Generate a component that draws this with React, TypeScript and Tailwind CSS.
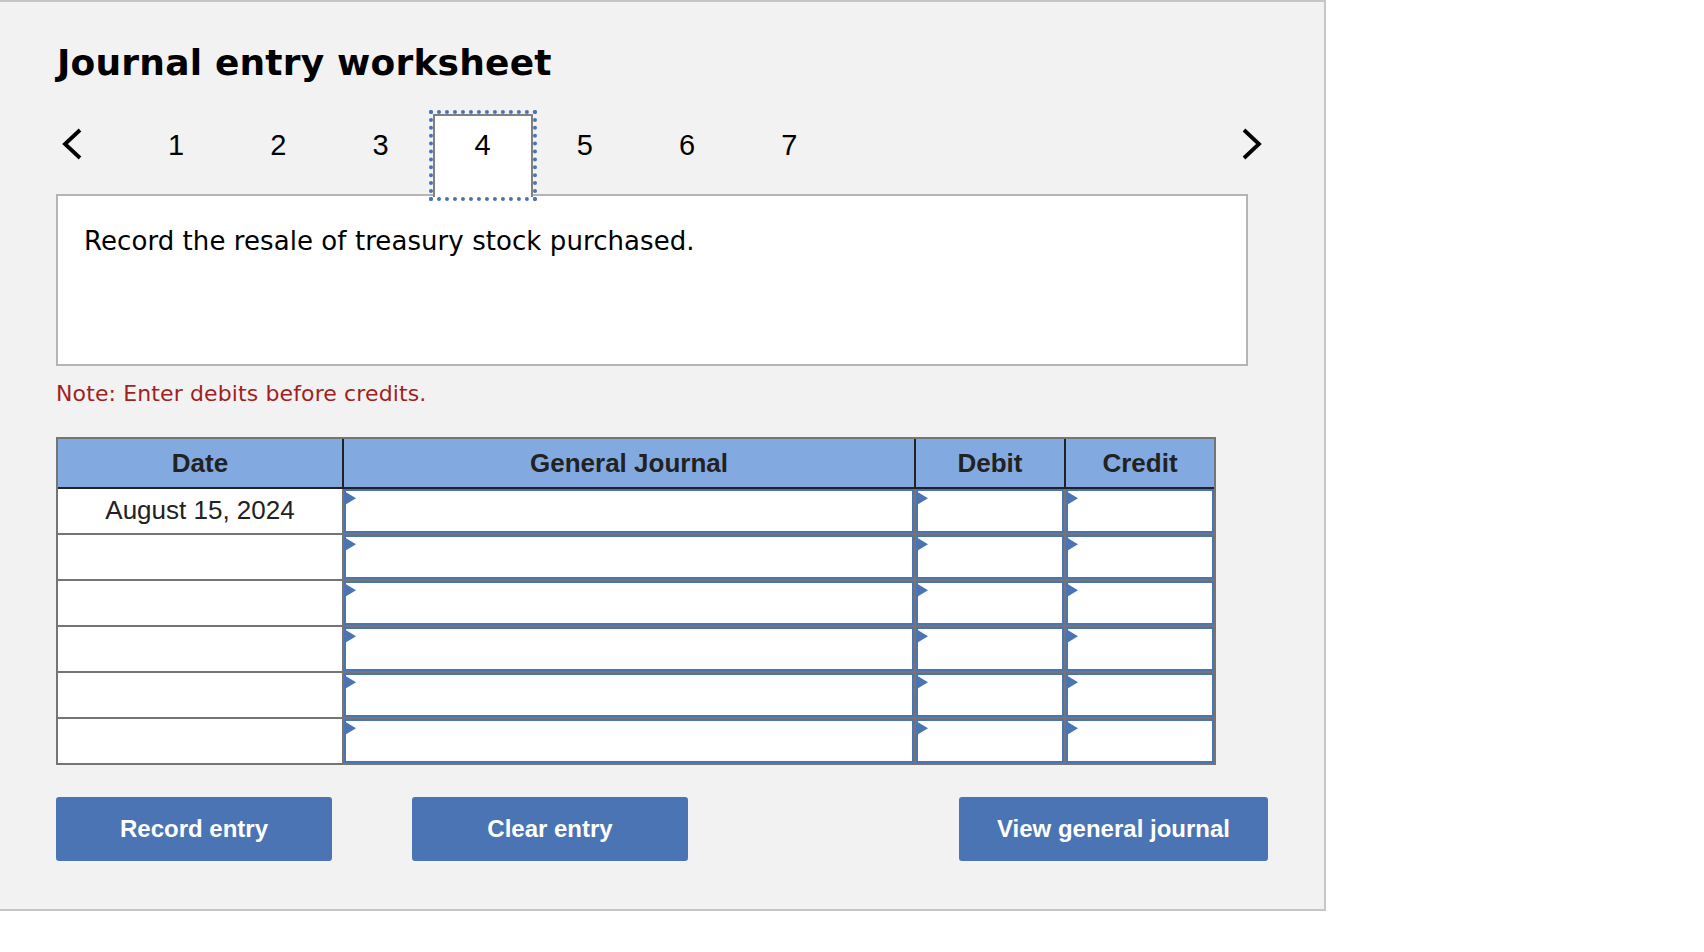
const BLUE = "#4a74b4";

function Chevron({ dir }: { dir: "left" | "right" }) {
  return (
    <svg width="24" height="34" viewBox="0 0 24 34" fill="none" stroke="#000" strokeWidth="3.8">
      <path d={dir === "left" ? "M20 3 L5 17 L20 31" : "M4 3 L19 17 L4 31"} />
    </svg>
  );
}

function Tab({ n, active }: { n: number; active?: boolean }) {
  if (active) {
    return (
      <div className="relative z-10 mx-[1px] h-[83px] w-[100.2px] border-2 border-b-0 border-[#808080] bg-white pt-[12px] text-center outline-4 outline-dotted outline-[#4a74b4]">
        {n}
      </div>
    );
  }
  return <div className="h-[83px] w-[102.2px] pt-[14px] text-center">{n}</div>;
}

function JournalInput() {
  return (
    <div className="relative h-full">
      <input
        type="text"
        aria-label="entry"
        className="block h-full w-full border-2 border-[#4a74b4] bg-white"
      />
      <svg className="absolute left-0 top-[2px]" width="13" height="15" viewBox="0 0 13 15">
        <polygon points="0,0 12,7.2 0,14.5" fill={BLUE} />
      </svg>
    </div>
  );
}

const rows = ["August 15, 2024", "", "", "", "", ""];

function Button({ label, className }: { label: string; className: string }) {
  return (
    <button
      type="button"
      className={`h-[64px] rounded-[3px] bg-[#4a74b4] text-[24px] font-bold text-white font-['Liberation_Sans',sans-serif] ${className}`}
    >
      {label}
    </button>
  );
}

export default function App() {
  return (
    <div className="min-h-[952px] bg-white">
      <div className="h-[911px] w-[1326px] border-t-2 border-r-2 border-b-2 border-[#c6c6c6] bg-[#f2f2f2] pl-[56px]">
        <h1 className="mt-0 pt-[36px] pl-[1px] text-[36px] leading-[50px] font-bold text-black font-['DejaVu_Sans',sans-serif] tracking-[0.2px]">
          Journal entry worksheet
        </h1>
        <div className="relative mt-[26px] flex h-[84px] items-start text-[29px] leading-[34px] text-black font-['Liberation_Sans',sans-serif]">
          <div className="w-[69px] pt-[13px] pl-[4px]">
            <Chevron dir="left" />
          </div>
          {[1, 2, 3, 4, 5, 6, 7].map((n) => (
            <Tab key={n} n={n} active={n === 4} />
          ))}
          <div className="ml-[400px] pt-[13px]">
            <Chevron dir="right" />
          </div>
        </div>
        <div className="-mt-[4px] h-[172px] w-[1192px] border-2 border-[#b5b5b5] bg-white pt-[27px] pl-[26px] text-[26px] leading-[36px] tracking-[0.07px] text-black font-['DejaVu_Sans',sans-serif]">
          Record the resale of treasury stock purchased.
        </div>
        <p className="mt-[13px] h-[30px] text-[22px] leading-[30px] tracking-[0.12px] text-[#a11f1f] font-['DejaVu_Sans',sans-serif]">
          Note: Enter debits before credits.
        </p>
        <div className="mt-[28px] w-[1160px] border-2 border-[#757575] text-[26px] text-[#222] font-['Liberation_Sans',sans-serif]">
          <div className="grid grid-cols-[286px_572px_150px_148px]">
            {["Date", "General Journal", "Debit", "Credit"].map((h, i) => (
              <div
                key={h}
                className={`flex h-[50px] items-center justify-center border-b-2 border-[#222] bg-[#82aae0] font-bold ${i < 3 ? "border-r-2" : ""}`}
              >
                {h}
              </div>
            ))}
            {rows.map((d, i) => {
              const last = i === rows.length - 1;
              const rowH = last ? "h-[44px]" : "h-[46px] border-b-2";
              return [
                <div key={`d${i}`} className={`flex ${rowH} items-center justify-center border-r-2 border-[#757575] bg-white pb-[2px]`}>
                  {d}
                </div>,
                <div key={`j${i}`} className={`${rowH} border-r-2 border-[#757575] bg-white`}>
                  <JournalInput />
                </div>,
                <div key={`a${i}`} className={`${rowH} border-r-2 border-[#757575] bg-white`}>
                  <JournalInput />
                </div>,
                <div key={`b${i}`} className={`${rowH} border-[#757575] bg-white`}>
                  <JournalInput />
                </div>,
              ];
            })}
          </div>
        </div>
        <div className="mt-[32px] flex">
          <Button label="Record entry" className="w-[276px]" />
          <Button label="Clear entry" className="ml-[80px] w-[276px]" />
          <Button label="View general journal" className="ml-[271px] w-[309px]" />
        </div>
      </div>
    </div>
  );
}
